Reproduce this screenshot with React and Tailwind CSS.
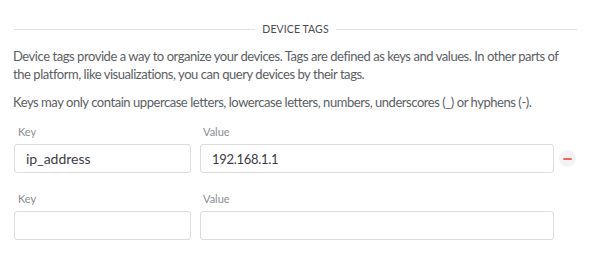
import React from 'react';

const TagRow = ({ tagKey, value, removable }) => {
    return (
        <div className="flex items-end">
            <div className="w-[177px] mr-[9px]">
                <label className="block text-[11px] text-[#8a8d93] pl-[4px] mb-[5px] leading-[14px]">Key</label>
                <input
                    defaultValue={tagKey}
                    className="w-full h-[29px] border border-[#dcdcdc] rounded-[3px] px-[11px] text-[14px] text-[#3a3d42] outline-none"
                />
            </div>
            <div className="w-[354px]">
                <label className="block text-[11px] text-[#8a8d93] pl-[3px] mb-[5px] leading-[14px]">Value</label>
                <input
                    defaultValue={value}
                    className="w-full h-[29px] border border-[#dcdcdc] rounded-[3px] px-[11px] text-[13px] tracking-[-0.3px] text-[#3a3d42] outline-none"
                />
            </div>
            {removable && (
                <button className="ml-[5px] mb-[6px] w-[17px] h-[17px] rounded-full bg-[#f3f3f5] flex items-center justify-center">
                    <span className="block w-[9px] h-[2px] bg-[#f2665a] rounded-full"></span>
                </button>
            )}
        </div>
    );
};

export default function App() {
    return (
        <div className="w-[600px] h-[266px] bg-white px-[13px] pt-[22px]" style={{ fontFamily: 'Lato, "Open Sans", sans-serif' }}>
            <div className="w-[563px] ml-[1px] flex items-center">
                <div className="flex-1 h-px bg-[#dedfe2]"></div>
                <span className="px-[7px] text-[10.5px] text-[#4a4d52] tracking-[0.1px] leading-[14px]">DEVICE TAGS</span>
                <div className="flex-1 h-px bg-[#dedfe2]"></div>
            </div>
            <p className="w-[560px] mt-[11px] text-[13px] tracking-[-0.45px] leading-[18px] text-[#5b5e63]">
                Device tags provide a way to organize your devices. Tags are defined as keys and values. In other parts of the platform, like visualizations, you can query devices by their tags.
            </p>
            <p className="w-[560px] mt-[10px] text-[13px] tracking-[-0.45px] leading-[18px] text-[#5b5e63]">
                Keys may only contain uppercase letters, lowercase letters, numbers, underscores (_) or hyphens (-).
            </p>
            <div className="mt-[14px] flex flex-col gap-[19px] pl-px">
                <TagRow tagKey="ip_address" value="192.168.1.1" removable />
                <TagRow tagKey="" value="" />
            </div>
        </div>
    );
}
